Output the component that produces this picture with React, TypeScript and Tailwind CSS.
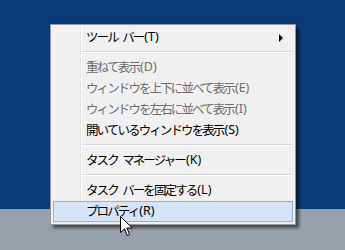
import React from 'react'

type Item =
  | { kind: 'item'; jp: string; key: string; disabled?: boolean; sub?: boolean; active?: boolean }
  | { kind: 'sep' }

const items: Item[] = [
  { kind: 'item', jp: 'ツール\u2002バー', key: '(T)', sub: true },
  { kind: 'sep' },
  { kind: 'item', jp: '重ねて表示', key: '(D)', disabled: true },
  { kind: 'item', jp: 'ウィンドウを上下に並べて表示', key: '(E)', disabled: true },
  { kind: 'item', jp: 'ウィンドウを左右に並べて表示', key: '(I)', disabled: true },
  { kind: 'item', jp: '開いているウィンドウを表示', key: '(S)' },
  { kind: 'sep' },
  { kind: 'item', jp: 'タスク\u2002マネージャー', key: '(K)' },
  { kind: 'sep' },
  { kind: 'item', jp: 'タスク\u2002バーを固定する', key: '(L)' },
  { kind: 'item', jp: 'プロパティ', key: '(R)', active: true },
]

const Cursor = () => (
  <svg className="absolute left-[120px] top-[216px]" width="14" height="21" viewBox="0 0 14 21">
    <path
      d="M0.5 0.5 L0.5 16.5 L4.5 12.8 L7.3 19.5 L9.6 18.5 L6.9 12 L12.3 12 Z"
      fill="#fff"
      stroke="#000"
      strokeWidth="1"
    />
  </svg>
)

export default function App() {
  return (
    <div
      className="relative w-[345px] h-[250px] overflow-hidden flex flex-col"
      style={{ fontFamily: '"Noto Sans CJK JP", "Noto Sans", sans-serif' }}
    >
      {/* desktop + taskbar */}
      <div className="flex-1 bg-[#0b3b77]" />
      <div className="h-[41px] bg-[#98a0aa]" />

      {/* context menu */}
      <div className="absolute left-[50px] top-[24px] w-[246px] border border-[#979797] bg-[#f0f0f0] p-[2px] shadow-[3px_3px_3px_rgba(0,0,0,0.55)]">
        <div className="relative">
          {/* gutter line */}
          <div className="absolute left-[27px] top-0 bottom-0 w-[1px] bg-[#e2e3e3]" />
          <div className="absolute left-[28px] top-0 bottom-0 w-[1px] bg-white" />
          {items.map((it, i) =>
            it.kind === 'sep' ? (
              <div key={i} className="h-[9px] pl-[29px] pt-[3px]">
                <div className="h-[1px] bg-[#d7d7d7]" />
                <div className="h-[1px] bg-white" />
              </div>
            ) : (
              <div
                key={i}
                className={`relative h-[21px] flex items-center pl-[32px] pr-2 border ${
                  it.active ? 'bg-[#d5e5f7] border-[#8fb3df]' : 'border-transparent'
                } ${it.disabled ? 'text-[#6d6d6d]' : 'text-black'}`}
              >
                <span className="leading-none text-[12.5px] tracking-[-1.9px]">{it.jp}</span>
                <span
                  className="leading-none text-[12.5px] ml-[1px]"
                  style={{ fontFamily: '"Noto Sans", sans-serif' }}
                >
                  {it.key}
                </span>
                {it.sub && (
                  <span className="absolute right-[9px] top-[6px] w-0 h-0 border-y-[4px] border-y-transparent border-l-[4px] border-l-black" />
                )}
              </div>
            )
          )}
        </div>
      </div>

      <Cursor />
    </div>
  )
}
